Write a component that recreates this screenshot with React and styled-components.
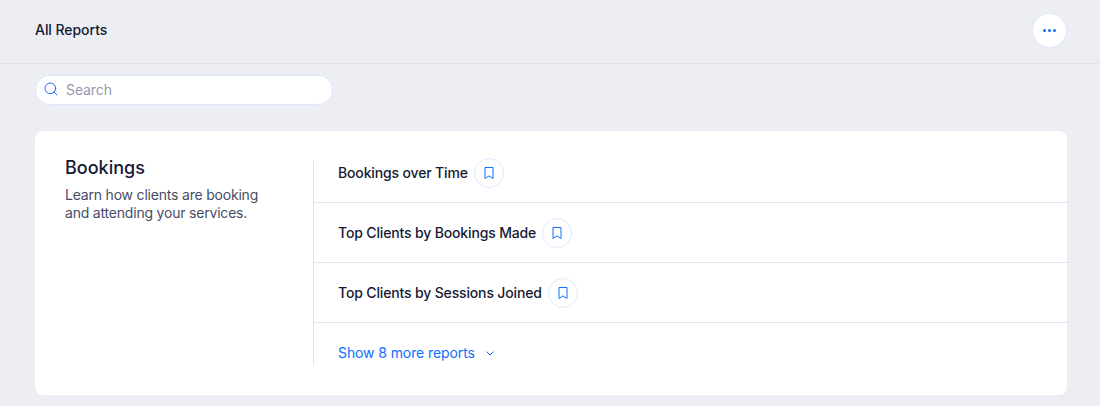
import React from 'react';
import styled, { createGlobalStyle } from 'styled-components';
import { Search } from 'lucide-react';

const GlobalStyle = createGlobalStyle`
  html, body {
    margin: 0;
    padding: 0;
    background: #eceef4;
    font-family: Inter, "Noto Sans", sans-serif;
    color: #151a33;
    overflow: hidden;
  }
`;

const Page = styled.div`
  width: 1100px;
  height: 406px;
  overflow: hidden;
`;

const Header = styled.header`
  height: 63px;
  box-sizing: content-box;
  border-bottom: 1px solid #e1e3ea;
  padding: 0 33px 0 35px;
  display: flex;
  align-items: flex-start;
  justify-content: space-between;
`;

const PageTitle = styled.h1`
  margin: 20px 0 0;
  font-size: 14px;
  line-height: 20px;
  font-weight: 500;
  letter-spacing: -0.05px;
`;

const RoundButton = styled.button`
  width: ${(p) => p.$size}px;
  height: ${(p) => p.$size}px;
  flex: none;
  padding: 0;
  border-radius: 50%;
  border: 1px solid #dfe9fb;
  background: #fff;
  color: #116dff;
  display: flex;
  align-items: center;
  justify-content: center;
  gap: 2px;
`;

const MoreButton = styled(RoundButton)`
  margin-top: 13px;
`;

const Dot = styled.span`
  width: 3px;
  height: 3px;
  border-radius: 50%;
  background: #116dff;
`;

const SearchRow = styled.div`
  padding: 11px 35px 26px;
`;

const SearchBox = styled.div`
  width: 298px;
  height: 30px;
  box-sizing: border-box;
  border: 1px solid #dce8fc;
  border-radius: 15px;
  background: #fff;
  padding: 0 0 2px 7px;
  display: flex;
  align-items: center;
  gap: 7px;
  color: #116dff;
`;

const SearchText = styled.span`
  font-size: 14px;
  letter-spacing: -0.1px;
  color: #9698ad;
`;

const Card = styled.section`
  margin: 0 33px 0 35px;
  height: 264px;
  box-sizing: border-box;
  background: #fff;
  border-radius: 8px;
  padding: 25px 0 30px 30px;
  display: flex;
`;

const Intro = styled.div`
  width: 248px;
  flex: none;
`;

const SectionTitle = styled.h2`
  margin: 0 0 6px;
  font-size: 18px;
  line-height: 24px;
  font-weight: 500;
`;

const SectionText = styled.p`
  margin: 0;
  font-size: 14px;
  line-height: 18px;
  letter-spacing: -0.2px;
  color: #484c66;
  width: 210px;
`;

const ReportList = styled.div`
  flex: 1;
  margin-top: 5px;
  border-left: 1px solid #dfe5f0;
`;

const ReportRow = styled.div`
  height: 60px;
  box-sizing: border-box;
  padding-left: 24px;
  border-bottom: 1px solid #dfe5f0;
  display: flex;
  align-items: center;
  gap: 6px;
  &:first-child {
    height: 42px;
    padding-bottom: 17px;
  }
`;

const ReportName = styled.span`
  font-size: 14px;
  line-height: 24px;
  font-weight: 500;
  letter-spacing: -0.15px;
`;

const ShowMore = styled.div`
  height: 25px;
  padding: 17px 0 0 24px;
  display: flex;
  align-items: center;
  gap: 10px;
  color: #116dff;
  font-size: 14px;
  letter-spacing: -0.1px;
`;

const BookmarkIcon = () => (
  <svg width="18" height="18" viewBox="0 0 18 18" fill="none" stroke="currentColor" strokeWidth="1">
    <path d="M5 3.5h8v11l-4-2.6-4 2.6z" strokeLinejoin="round" />
  </svg>
);

const ChevronIcon = () => (
  <svg width="10" height="10" viewBox="0 0 10 10" fill="none" stroke="currentColor" strokeWidth="1">
    <path d="M1.5 3.5 5 7l3.5-3.5" />
  </svg>
);

const reports = ['Bookings over Time', 'Top Clients by Bookings Made', 'Top Clients by Sessions Joined'];

export default function App() {
  return (
    <Page>
      <GlobalStyle />
      <Header>
        <PageTitle>All Reports</PageTitle>
        <MoreButton $size={35}>
          <Dot /><Dot /><Dot />
        </MoreButton>
      </Header>
      <SearchRow>
        <SearchBox>
          <Search size={16} strokeWidth={1.5} />
          <SearchText>Search</SearchText>
        </SearchBox>
      </SearchRow>
      <Card>
        <Intro>
          <SectionTitle>Bookings</SectionTitle>
          <SectionText>Learn how clients are booking and attending your services.</SectionText>
        </Intro>
        <ReportList>
          {reports.map((name) => (
            <ReportRow key={name}>
              <ReportName>{name}</ReportName>
              <RoundButton $size={30}>
                <BookmarkIcon />
              </RoundButton>
            </ReportRow>
          ))}
          <ShowMore>
            Show 8 more reports
            <ChevronIcon />
          </ShowMore>
        </ReportList>
      </Card>
    </Page>
  );
}
